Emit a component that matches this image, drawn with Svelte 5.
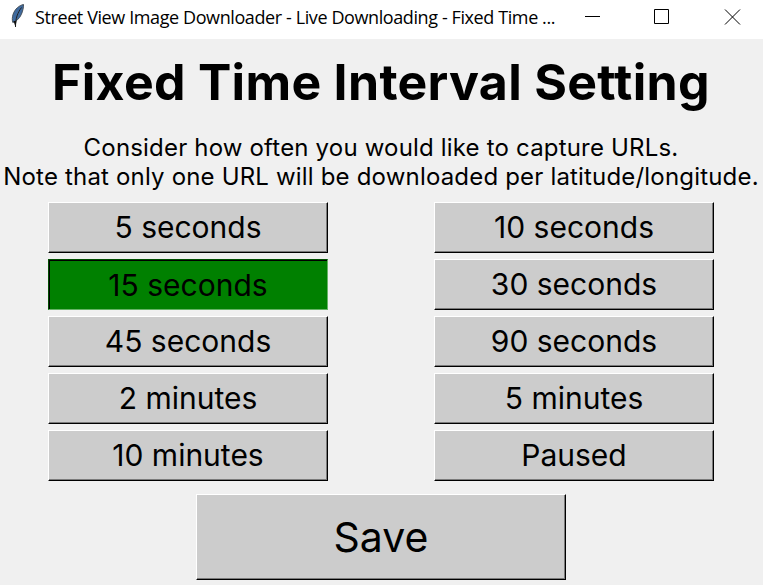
<script>
  const options = [
    ['5 seconds', '10 seconds'],
    ['15 seconds', '30 seconds'],
    ['45 seconds', '90 seconds'],
    ['2 minutes', '5 minutes'],
    ['10 minutes', 'Paused']
  ];
  let selected = $state('15 seconds');
</script>

<div class="window">
  <header>
    <svg class="feather" width="16" height="26" viewBox="0 0 16 26">
      <path d="M14.500 .5C10 1.500 6 5 4.200 10c-1 3-1.200 6-.4 8.500 3-1 6.500-3.500 8.500-8 1.500-3.500 2.300-7 2.200-10z" fill="#3f6a9e" stroke="#46505a" stroke-width="1" />
      <path d="M12.500 3.500C8.500 9 6.500 14 6.500 23" fill="none" stroke="#222" stroke-width="1" />
      <path d="M4.500 17l2 6 1-6z" fill="#111" />
    </svg>
    <span class="caption">Street View Image Downloader - Live Downloading - Fixed Time ...</span>
    <svg class="controls" width="160" height="18" viewBox="0 0 160 18" fill="none" stroke="#000" stroke-width="1">
      <path d="M2 8.500h15M71.500 1.500h14v14h-14z" />
      <path d="M142 1.500l15 15M157 1.500l-15 15" />
    </svg>
  </header>
  <main>
    <h1>Fixed Time Interval Setting</h1>
    <p><span>Consider how often you would like to capture URLs.</span><span>Note that only one URL will be downloaded per latitude/longitude.</span></p>
    <div class="grid">
      {#each options.flat() as option}
        <button class:selected={selected === option} onclick={() => (selected = option)}>{option}</button>
      {/each}
    </div>
    <button class="save">Save</button>
  </main>
</div>

<style>
  .window { width: 763px; height: 585px; overflow: hidden; background: #f0f0f0; color: #000; font-family: Inter, sans-serif; }
  header { height: 39px; box-sizing: border-box; background: #fff; display: flex; padding: 4px 0 0 9px; }
  .feather { flex: none; }
  .caption { margin-left: 10px; width: 522px; flex: none; white-space: nowrap; font: 18px/27px "Open Sans", sans-serif; letter-spacing: -0.4px; }
  .controls { flex: none; margin: 4px 0 0 26px; }
  main { width: 762px; display: flex; flex-direction: column; align-items: center; }
  h1 { margin: 12px 0 0; font-size: 50px; line-height: 62px; font-weight: 700; letter-spacing: 0.3px; white-space: nowrap; }
  p { margin: 20px 0 0; font-size: 24px; line-height: 29px; letter-spacing: 0.18px; white-space: nowrap; display: flex; flex-direction: column; align-items: center; }
  .grid { margin-top: 11px; display: grid; grid-template-columns: 280px 280px; column-gap: 106px; row-gap: 6px; }
  button { box-sizing: border-box; height: 51px; padding: 0; border: 1px solid; border-color: #fff #000 #000 #fff; box-shadow: inset -1px -1px #7a7a7a; background: #ccc; color: #000; font: 30px/49px Inter, sans-serif; }
  .selected { background: #008000; border-color: #004d00 #66b366 #66b366 #004d00; box-shadow: inset 1px 1px #000; padding-top: 2px; line-height: 47px; }
  .save { margin-top: 13px; width: 370px; height: 86px; font-size: 41px; }
</style>
